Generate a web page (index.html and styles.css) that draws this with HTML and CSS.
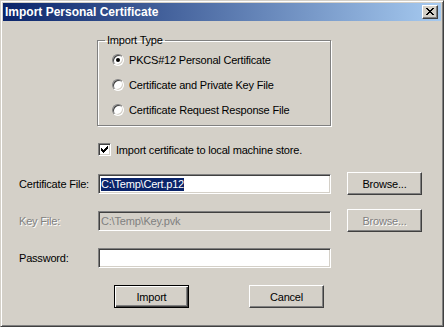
FILE: index.html
```html
<!DOCTYPE html>
<html lang="en">
<head>
    <meta charset="UTF-8">
    <title>Import Personal Certificate</title>
    <link rel="stylesheet" href="styles.css">
</head>
<body>
    <div class="window">
        <!-- Title bar -->
        <div class="titlebar">
            <span class="title">Import Personal Certificate</span>
            <span class="close">
                <svg width="8" height="7" viewBox="0 0 8 7" shape-rendering="crispEdges">
                    <path fill="#000" d="M0 0h2v1H0z M6 0h2v1H6z M1 1h2v1H1z M5 1h2v1H5z M2 2h4v1H2z M3 3h2v1H3z M2 4h4v1H2z M1 5h2v1H1z M5 5h2v1H5z M0 6h2v1H0z M6 6h2v1H6z"/>
                </svg>
            </span>
        </div>

        <div class="content">
            <!-- Import type group -->
            <fieldset class="group">
                <legend>Import Type</legend>
                <div class="option"><span class="radio checked"></span>PKCS#12 Personal Certificate</div>
                <div class="option"><span class="radio"></span>Certificate and Private Key File</div>
                <div class="option"><span class="radio"></span>Certificate Request Response File</div>
            </fieldset>

            <!-- Machine store checkbox -->
            <div class="check-row">
                <span class="checkbox">
                    <svg width="7" height="7" viewBox="0 0 7 7" shape-rendering="crispEdges">
                        <path fill="#000" d="M6 0h1v1H6z M5 1h2v1H5z M0 2h1v1H0z M4 2h3v1H4z M0 3h2v1H0z M3 3h3v1H3z M0 4h5v1H0z M1 5h3v1H1z M2 6h1v1H2z"/>
                    </svg>
                </span>
                Import certificate to local machine store.
            </div>

            <!-- File fields -->
            <div class="fields">
                <span class="label">Certificate File:</span>
                <div class="field"><span class="selected">C:\Temp\Cert.p12</span></div>
                <div class="btn">Browse...</div>

                <span class="label disabled">Key File:</span>
                <div class="field inactive">C:\Temp\Key.pvk</div>
                <div class="btn disabled">Browse...</div>

                <span class="label">Password:</span>
                <div class="field"></div>
            </div>

            <!-- Dialog buttons -->
            <div class="actions">
                <div class="btn default">Import</div>
                <div class="btn">Cancel</div>
            </div>
        </div>
    </div>
</body>
</html>
```

FILE: styles.css
```css
/* General styling */
* {
    box-sizing: border-box;
}
body {
    margin: 0;
    font-family: "Liberation Sans", Arial, sans-serif;
    font-size: 11px;
    letter-spacing: -0.2px;
    color: #000;
    background: #d4d0c8;
}

/* Window frame */
.window {
    width: 444px;
    height: 327px;
    background: #d4d0c8;
    border: 1px solid;
    border-color: #d4d0c8 #404040 #404040 #d4d0c8;
    padding: 2px;
    box-shadow: inset 1px 1px #fff, inset -1px -1px #808080;
}

/* Title bar */
.titlebar {
    height: 18px;
    display: flex;
    align-items: center;
    justify-content: space-between;
    padding: 0 3px 0 2px;
    background: linear-gradient(to right, #0a246a, #a6caf0);
}
.title {
    color: #fff;
    font-weight: bold;
    font-size: 12px;
    letter-spacing: 0;
}
.close {
    width: 16px;
    height: 14px;
    display: flex;
    align-items: center;
    justify-content: center;
    background: #d4d0c8;
    border: 1px solid;
    border-color: #fff #404040 #404040 #fff;
    box-shadow: inset -1px -1px #808080;
    padding-bottom: 1px;
}

/* Group box */
.group {
    margin: 13px 0 0 94px;
    width: 234px;
    height: 92px;
    padding: 6px 0 0 0;
    border: 1px solid #808080;
    box-shadow: inset 1px 1px #fff, 1px 1px #fff;
    display: flex;
    flex-direction: column;
    gap: 12px;
    min-inline-size: 0;
}
.group legend {
    margin-left: 7px;
    padding: 0 2px;
    line-height: 13px;
}
.option {
    display: flex;
    align-items: center;
    height: 13px;
    padding-left: 14px;
}
.radio {
    width: 12px;
    height: 12px;
    margin-right: 5px;
    border-radius: 50%;
    background: #fff;
    border: 1px solid;
    border-color: #808080 #fff #fff #808080;
    box-shadow: inset 1px 1px #404040, inset -1px -1px #d4d0c8;
    display: flex;
    align-items: center;
    justify-content: center;
}
.radio.checked::after {
    content: "";
    width: 4px;
    height: 4px;
    border-radius: 50%;
    background: #000;
}

/* Checkbox */
.check-row {
    display: flex;
    align-items: center;
    height: 13px;
    margin: 17px 0 0 95px;
}
.checkbox {
    width: 13px;
    height: 13px;
    margin-right: 5px;
    background: #fff;
    border: 1px solid;
    border-color: #808080 #fff #fff #808080;
    box-shadow: inset 1px 1px #404040, inset -1px -1px #d4d0c8;
    display: flex;
    align-items: center;
    justify-content: center;
}

/* Fields */
.fields {
    display: grid;
    grid-template-columns: 79px 249px 75px;
    grid-auto-rows: 23px;
    row-gap: 14px;
    align-items: center;
    margin-top: 16px;
    padding-left: 16px;
}
.field {
    width: 233px;
    height: 20px;
    background: #fff;
    border: 1px solid;
    border-color: #808080 #fff #fff #808080;
    box-shadow: inset 1px 1px #404040, inset -1px -1px #d4d0c8;
    padding: 0 2px;
    line-height: 18px;
}
.field.inactive {
    background: #d4d0c8;
    color: #808080;
}
.selected {
    display: inline-block;
    background: #0a246a;
    color: #fff;
    line-height: 13px;
}
.disabled {
    color: #808080;
    text-shadow: 1px 1px #fff;
}

/* Buttons */
.btn {
    width: 75px;
    height: 23px;
    display: flex;
    align-items: center;
    justify-content: center;
    background: #d4d0c8;
    border: 1px solid;
    border-color: #fff #404040 #404040 #fff;
    box-shadow: inset -1px -1px #808080;
}
.btn.default {
    border-color: #000;
    box-shadow: inset 1px 1px #fff, inset -1px -1px #404040, inset -2px -2px #808080;
}
.actions {
    display: flex;
    gap: 60px;
    margin: 16px 0 0 111px;
}
```
